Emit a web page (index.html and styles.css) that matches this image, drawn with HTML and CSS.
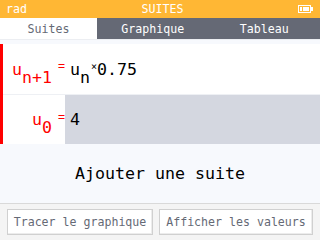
FILE: index.html
```html
<!DOCTYPE html>
<html>
<head lang="fr">
    <meta charset="UTF-8">
    <title>Suites</title>
    <link rel="stylesheet" href="styles.css">
</head>
<body>
<div class="screen">
    <div class="titlebar">
        <span class="angle">rad</span>
        <span class="title">SUITES</span>
        <svg class="battery" width="15" height="8" viewBox="0 0 15 8">
            <rect x="0.5" y="0.5" width="12" height="7" fill="none" stroke="#fff"/>
            <rect x="2" y="2" width="2" height="4" fill="#fff"/>
            <rect x="5" y="2" width="6" height="4" fill="#fff"/>
            <rect x="13" y="2" width="2" height="4" fill="#fff"/>
        </svg>
    </div>
    <div class="tabs">
        <div class="tab active">Suites</div>
        <div class="tab">Graphique</div>
        <div class="tab">Tableau</div>
    </div>
    <div class="list">
        <div class="sequence">
            <div class="row">
                <div class="name"><span class="lbl">u<sub>n+1</sub></span><span class="eq">=</span></div>
                <div class="expr"><span>u<sub>n</sub><span class="times">×</span>0.75</span></div>
            </div>
            <div class="row second">
                <div class="name"><span class="lbl">u<sub>0</sub></span><span class="eq">=</span></div>
                <div class="expr editing"><span>4</span></div>
            </div>
        </div>
        <div class="add">Ajouter une suite</div>
    </div>
    <div class="buttons">
        <div class="button">Tracer le graphique</div>
        <div class="button">Afficher les valeurs</div>
    </div>
</div>
</body>
</html>
```
FILE: styles.css
```css
*{
    padding: 0;
    margin: 0;
    box-sizing: border-box;
}
body{
    background: #fff;
    font-family: "DejaVu Sans Mono", "Liberation Mono", monospace;
}
.screen{
    width: 320px;
    height: 240px;
    display: flex;
    flex-direction: column;
    overflow: hidden;
}
.titlebar{
    height: 18px;
    background: #ffb734;
    color: #fff;
    font-size: 11.6px;
    display: flex;
    align-items: center;
    justify-content: space-between;
    padding: 0 7px 0 6px;
}
.battery{
    display: block;
}
.tabs{
    height: 22px;
    display: grid;
    grid-template-columns: 97px 1fr 1fr;
    background: #656975;
    border-bottom: 1px solid #eceef2;
}
.tab{
    color: #fff;
    font-size: 11.6px;
    display: flex;
    align-items: center;
    justify-content: center;
}
.tab.active{
    background: #fff;
    color: #656975;
}
.list{
    flex: 1;
    background: #f7f9fd;
    padding-top: 4px;
    display: flex;
    flex-direction: column;
}
.sequence{
    border-left: 3px solid #ff0000;
    background: #fff;
}
.row{
    height: 50px;
    display: flex;
    font-size: 16.6px;
}
.row.second{
    height: 50px;
    border-top: 1px solid #eef0f4;
}
.name{
    width: 62px;
    display: flex;
    align-items: center;
    justify-content: flex-end;
    color: #ff0000;
}
.name .eq{
    font-size: 11.6px;
    margin-left: 6px;
    position: relative;
    top: -3px;
}
sub{
    font-size: 16.6px;
    vertical-align: -8px;
    line-height: 0;
}
.expr{
    flex: 1;
    display: flex;
    align-items: center;
    padding-left: 5px;
    color: #000;
}
.expr sub{
    margin-right: 1px;
}
.times{
    font-size: 10px;
    position: relative;
    top: -5px;
}
.expr.editing{
    background: #d4d7e0;
}
.add{
    flex: 1;
    display: flex;
    align-items: center;
    justify-content: center;
    font-size: 16.6px;
    color: #000;
}
.buttons{
    height: 37px;
    border-top: 1px solid #d9d9d9;
    background: #f4f4f4;
    display: flex;
    gap: 6px;
    padding: 5px 7px 5px 7px;
}
.button{
    background: #fff;
    border: 1px solid #d0d0d0;
    box-shadow: inset -1px -1px 0 #ececec;
    color: #656975;
    font-size: 11.6px;
    display: flex;
    align-items: center;
    justify-content: center;
    flex: 0 0 146px;
}
.button + .button{
    flex: 1;
}
```
